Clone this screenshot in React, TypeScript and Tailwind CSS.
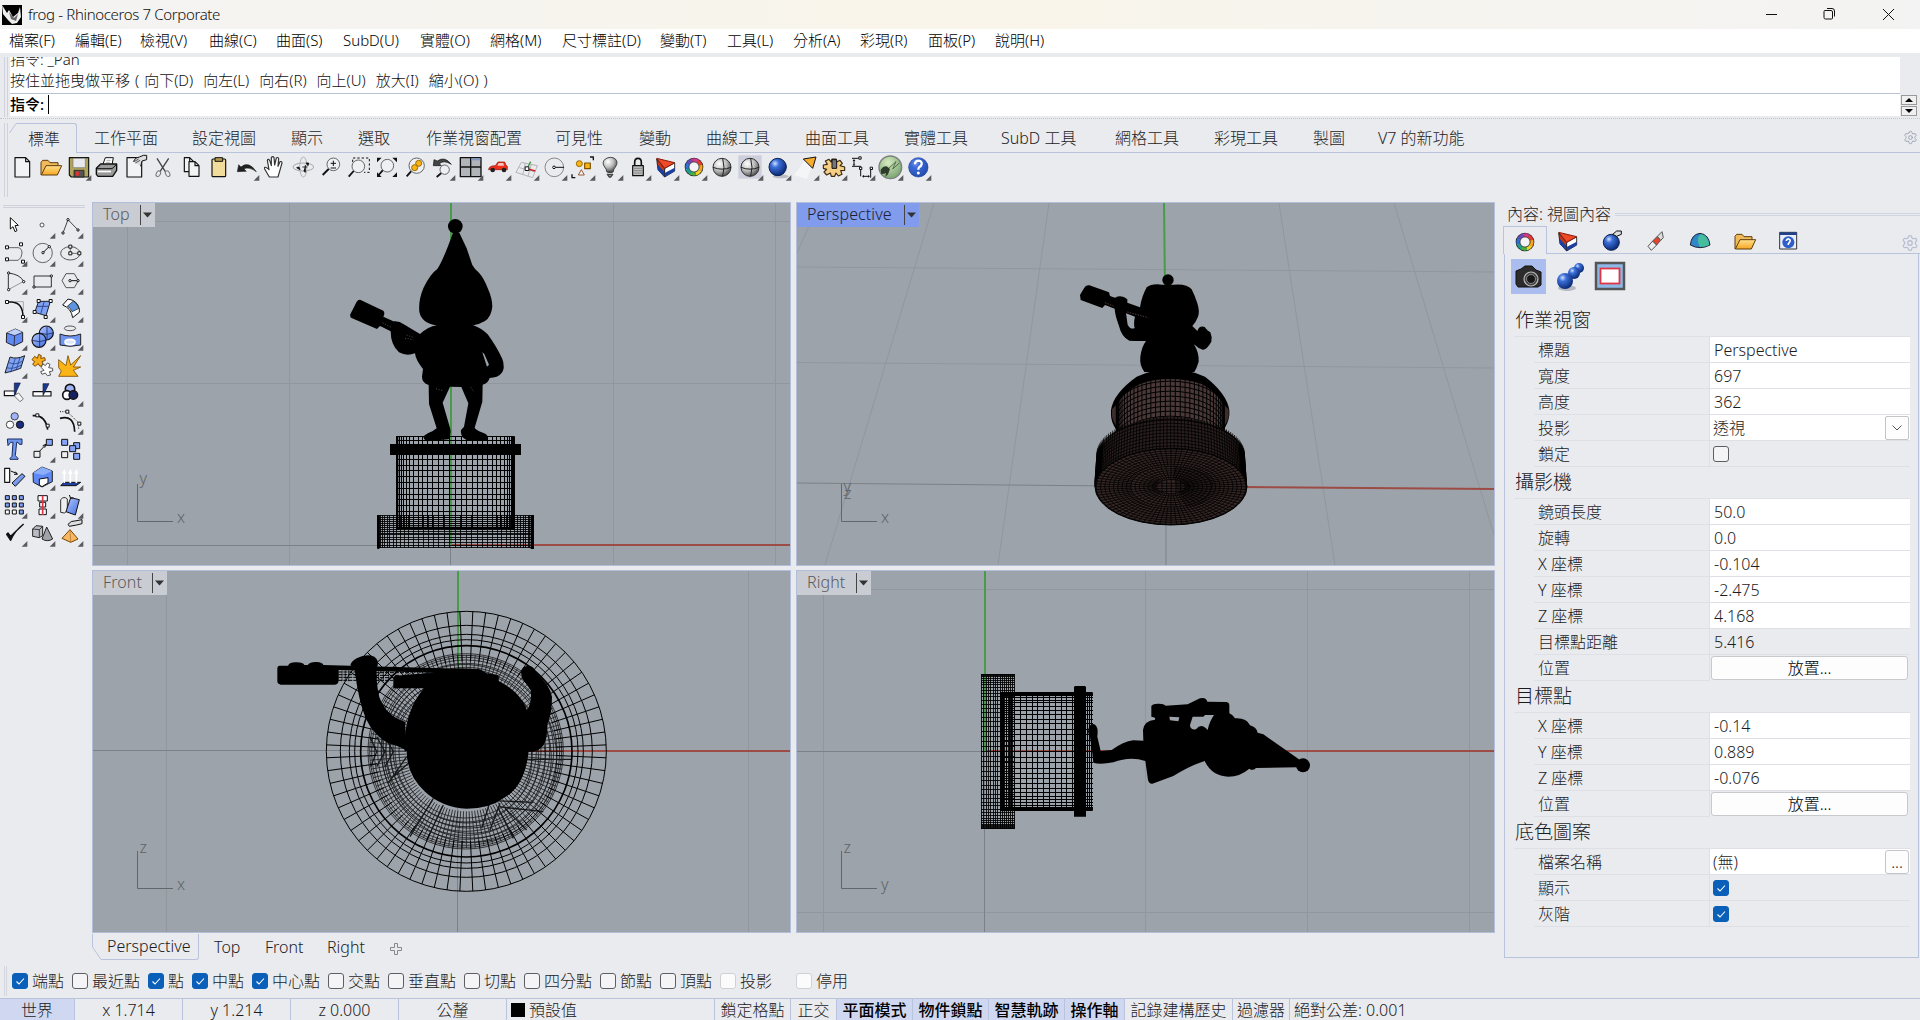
import React from "react";
import { Settings } from "lucide-react";

const FONT = "font-['Noto_Sans','Noto_Sans_CJK_TC',sans-serif]";

/* ---------- icon primitives (84 x 84 drawing units per 28px cell) ---------- */
const K = "#111";
const Sq = ({ x, y, s = 9, f = "#fff" }: { x: number; y: number; s?: number; f?: string }) => (
  <rect x={x - s / 2} y={y - s / 2} width={s} height={s} fill={f} stroke={K} strokeWidth={3} />
);
const Dot = ({ x, y, r = 3.5 }: { x: number; y: number; r?: number }) => (
  <circle cx={x} cy={y} r={r} fill="#fff" stroke={K} strokeWidth={3} />
);
const Ic = ({ children, tri = false }: { children?: React.ReactNode; tri?: boolean }) => (
  <svg viewBox="0 0 84 84" className="h-7 w-7 shrink-0" fill="none" strokeLinejoin="round">
    {children}
    {tri && <path d="M65 83H82V66Z" fill="#5b5b5f" />}
  </svg>
);
const Defs = () => (
  <svg className="absolute h-0 w-0">
    <defs>
      <radialGradient id="bl" cx=".35" cy=".3" r=".75">
        <stop offset="0" stopColor="#cfe0ff" />
        <stop offset=".3" stopColor="#3c6fd8" />
        <stop offset="1" stopColor="#06246e" />
      </radialGradient>
      <radialGradient id="gy" cx=".35" cy=".3" r=".8">
        <stop offset="0" stopColor="#fff" />
        <stop offset=".5" stopColor="#bcbcbc" />
        <stop offset="1" stopColor="#3a3a3a" />
      </radialGradient>
      <linearGradient id="lb" x1="0" y1="0" x2="1" y2="1">
        <stop offset="0" stopColor="#b4c8ff" />
        <stop offset="1" stopColor="#3f6de0" />
      </linearGradient>
      <linearGradient id="yl" x1="0" y1="0" x2="0" y2="1">
        <stop offset="0" stopColor="#ffe08a" />
        <stop offset="1" stopColor="#f5a623" />
      </linearGradient>
      <radialGradient id="gr" cx=".4" cy=".3" r=".8">
        <stop offset="0" stopColor="#d5ecc0" />
        <stop offset="1" stopColor="#6f9a68" />
      </radialGradient>
    </defs>
  </svg>
);

const Lens = ({ x = 52, y = 34, r = 19, hx = 20, hy = 66 }) => (
  <>
    <path d={`M${x - r * 0.7} ${y + r * 0.7}L${hx} ${hy}`} stroke={K} strokeWidth={5.5} />
    <circle cx={x} cy={y} r={r} fill="#eef0f3" stroke="#666" strokeWidth={3} />
  </>
);
const Page = ({ x = 21, y = 14, w = 44, h = 58 }) => (
  <path d={`M${x} ${y}H${x + w - 12}L${x + w} ${y + 12}V${y + h}H${x}Z M${x + w - 12} ${y}V${y + 12}H${x + w}`} fill="#f2f3f5" stroke={K} strokeWidth={3.5} />
);
const Folder = () => (
  <>
    <path d="M15 66V28L20 22H36L42 29H66V38" fill="#f0b95a" stroke="#5f3d0a" strokeWidth={3} />
    <path d="M16 66L30 38H77L64 66Z" fill="url(#yl)" stroke="#5f3d0a" strokeWidth={3} />
  </>
);
const Cake = () => (
  <>
    <path d="M14 18L38 46V72L18 50Z" fill="#c5361c" stroke={K} strokeWidth={2.5} />
    <path d="M16 34L38 58V72L18 52Z" fill="#1c3fa0" />
    <path d="M38 46L68 30V54L38 72Z" fill="#fff" stroke={K} strokeWidth={2.5} />
    <path d="M38 60L68 44V55L38 72Z" fill="#1c3fa0" />
    <path d="M14 16L68 29L38 46Z" fill="#ef4a28" stroke="#8b1c0c" strokeWidth={3} />
  </>
);
const Ring = () => {
  const cols = ["#e23b2e", "#f7a51c", "#f5d020", "#4caf3f", "#1e9e8f", "#2f6fd6", "#6b49b8", "#d03a8a"];
  return (
    <>
      <circle cx={42} cy={42} r={28} fill="#222" />
      {cols.map((c, i) => (
        <circle key={c} cx={42} cy={42} r={21} stroke={c} strokeWidth={10} strokeDasharray="17 200" transform={`rotate(${i * 45 - 60} 42 42)`} />
      ))}
      <circle cx={42} cy={42} r={15} fill="#f4f4f6" stroke="#444" strokeWidth={2} />
    </>
  );
};
const GraySphere = () => (
  <>
    <circle cx={42} cy={43} r={27} fill="url(#gy)" stroke="#333" strokeWidth={3} />
    <path d="M15 43Q42 54 69 43M44 16Q52 43 44 70" stroke="#222" strokeWidth={3} />
  </>
);

/* ---------- main toolbar ---------- */
const topIcons: [React.ReactNode, boolean][] = [
  [<Page />, false],
  [<Folder />, false],
  [<><path d="M16 14H74V72H22L16 66Z" fill="#b0a45c" stroke={K} strokeWidth={3.5} /><rect x={27} y={16} width={37} height={28} fill="#e7e9ee" stroke="#777" strokeWidth={2} /><rect x={30} y={52} width={30} height={20} fill="#555" stroke={K} strokeWidth={2} /><rect x={36} y={56} width={9} height={12} fill="#d33" /></>, true],
  [<><path d="M32 36L40 14H64L60 36Z" fill="#fff" stroke={K} strokeWidth={3} /><path d="M13 46L26 33H74V52L62 70H18L13 64Z" fill="#9a9a9a" stroke={K} strokeWidth={4} /><path d="M14 47H60L73 35" stroke={K} strokeWidth={3} /><rect x={17} y={53} width={40} height={5} fill="#fff" /><path d="M44 22H56M42 28H54" stroke="#888" strokeWidth={2} /></>, false],
  [<><Page /><path d="M40 26Q46 12 58 12L70 7H80V20L66 24L62 40" fill="#ddd" stroke={K} strokeWidth={3} /><path d="M42 26L56 18M46 30L60 22" stroke={K} strokeWidth={2} /></>, false],
  [<><path d="M27 16L52 56M62 16L36 56" stroke="#444" strokeWidth={4} /><ellipse cx={31} cy={62} rx={6} ry={9} stroke="#777" strokeWidth={3} transform="rotate(30 31 62)" /><ellipse cx={59} cy={62} rx={6} ry={9} stroke="#777" strokeWidth={3} transform="rotate(-30 59 62)" /></>, false],
  [<><Page x={25} w={28} h={42} /><Page x={39} y={26} w={30} h={44} /></>, false],
  [<><rect x={24} y={18} width={41} height={53} rx={3} fill="#f1dc9c" stroke={K} strokeWidth={3.5} /><rect x={33} y={14} width={23} height={11} fill="#b39a4c" stroke={K} strokeWidth={3} /></>, false],
  [<path d="M16 56L20 35L27 42Q50 22 73 56Q50 40 36 48L43 55Z" fill="#222" stroke={K} strokeWidth={1.5} />, true],
  [<path d="M28 72L14 48Q12 40 20 44L27 50L22 22Q24 16 29 22L34 38L34 14Q38 8 42 14L44 36L49 15Q54 11 56 17L54 40L60 26Q66 24 66 30L58 58L54 72Z" fill="#fff" stroke="#333" strokeWidth={3.5} />, false],
  [<><ellipse cx={46} cy={42} rx={31} ry={12} stroke="#999" strokeWidth={2.5} /><ellipse cx={46} cy={42} rx={11} ry={30} stroke="#aaa" strokeWidth={2.5} /><path d="M26 44L36 50L33 42ZM54 30L60 38L62 30ZM43 42H58M52 36V58L47 54" fill={K} stroke={K} strokeWidth={2.5} /></>, false],
  [<><Lens /><path d="M44 31H60M52 23V39M44 45H60" stroke={K} strokeWidth={3} /></>, false],
  [<><path d="M26 40V15H76V58H60" stroke={K} strokeWidth={3} strokeDasharray="7 6" /><Lens x={43} y={40} hx={14} hy={71} /></>, false],
  [<><Lens x={46} y={38} hx={20} hy={66} /><path d="M15 28V14H29ZM61 14H75V28ZM15 58V72H29ZM75 58V72H61Z" fill={K} /></>, false],
  [<><Lens x={50} y={38} r={23} hx={20} hy={70} /><circle cx={56} cy={31} r={9} fill="#fbb416" stroke="#9a6a00" strokeWidth={3} /><circle cx={44} cy={44} r={9} fill="#fbb416" stroke="#9a6a00" strokeWidth={3} /></>, false],
  [<><path d="M16 38L18 20L28 24Q50 8 70 34Q48 20 34 32L40 38Z" fill="#444" stroke={K} strokeWidth={2} /><Lens x={50} y={50} r={14} hx={26} hy={72} /></>, true],
  [<><rect x={13} y={14} width={62} height={57} fill="#b1b4b9" stroke={K} strokeWidth={4} /><path d="M44 14V71M13 42H75" stroke={K} strokeWidth={4} /><path d="M46 16H73V22H46Z" fill="#8097c0" /></>, true],
  [<><path d="M14 48Q16 38 34 38L42 27H62L66 37L70 40V50H14Z" fill="#ee2f1c" stroke="#8d1108" strokeWidth={2} /><path d="M44 30H58L60 38H40Z" fill="#f7c5c0" /><circle cx={26} cy={51} r={7} fill="#222" /><circle cx={60} cy={51} r={7} fill="#222" /></>, true],
  [<><path d="M12 58L28 28L76 38L62 74ZM22 44L68 56M40 30L32 66M58 34L48 70" stroke="#aaa" strokeWidth={2.5} /><path d="M48 42L56 26" stroke="#3b9b3b" strokeWidth={4} /><path d="M48 48L70 54" stroke="#c22" strokeWidth={4} /><Sq x={45} y={47} s={11} /></>, true],
  [<><circle cx={43} cy={43} r={28} stroke="#888" strokeWidth={3} /><path d="M43 43H72" stroke={K} strokeWidth={3} /><circle cx={42} cy={43} r={4} fill="#fff" stroke={K} strokeWidth={3} /></>, true],
  [<><path d="M12 64V74H22M66 12H76V22" stroke={K} strokeWidth={4} /><circle cx={34} cy={32} r={9} fill="#fbb416" stroke="#9a6a00" strokeWidth={3} /><rect x={50} y={30} width={17} height={17} fill="#fbb416" stroke="#7a5200" strokeWidth={3.5} /><path d="M40 50L49 66H31Z" fill="#f4f4f4" stroke="#965a3a" strokeWidth={3} /></>, true],
  [<><path d="M32 56Q32 48 26 42Q16 28 28 18Q44 8 58 18Q68 28 58 42Q52 48 52 56Z" fill="url(#gy)" stroke="#444" strokeWidth={3} /><path d="M34 58H50M34 64H50L44 72H40Z" fill="#999" stroke="#444" strokeWidth={4} /></>, true],
  [<><path d="M32 42V28Q32 16 42 16Q52 16 52 28V42" stroke={K} strokeWidth={5} /><rect x={26} y={38} width={32} height={30} fill="#bdbdbd" stroke={K} strokeWidth={3.5} /><path d="M30 46H54M30 53H54M30 60H54" stroke="#888" strokeWidth={3} /></>, true],
  [<Cake />, true],
  [<Ring />, true],
  [<GraySphere />, false],
  [<><rect x={7} y={7} width={70} height={70} fill="#cdd0dc" /><GraySphere /></>, true],
  [<><ellipse cx={50} cy={70} rx={24} ry={6} fill="#b9bcc4" /><circle cx={41} cy={42} r={26} fill="url(#bl)" stroke="#0a2050" strokeWidth={3} /></>, true],
  [<><path d="M38 24L58 46L44 78L6 66Z" fill="#f5f5f7" /><path d="M34 18L72 12L62 46Z" fill="#f7ac2c" stroke={K} strokeWidth={3} /></>, true],
  [<><path d="M36 18H48L50 27L60 22L67 31L60 38L74 42V52L62 53L66 64L55 69L48 60L44 70H34L31 60L20 66L12 57L20 49L10 46V36L22 34L16 24L27 19L34 27Z" fill="#f4cf85" stroke="#3a2a10" strokeWidth={3.5} /><rect x={36} y={20} width={14} height={26} fill="#777" stroke={K} strokeWidth={3} /></>, true],
  [<><path d="M12 16H32M12 40H38V70M68 46V74M18 22V34M46 70H60" stroke={K} strokeWidth={3} /><path d="M14 24L18 18L22 24ZM14 34L18 40L22 34ZM48 66L42 70L48 74ZM60 66L66 70L60 74Z" fill={K} /><Sq x={36} y={15} s={7} /><Sq x={38} y={46} s={7} /><Sq x={70} y={46} s={7} /></>, true],
  [<><circle cx={43} cy={43} r={34} fill="url(#gr)" stroke="#7b807b" strokeWidth={4} /><path d="M38 46L60 26L50 48L70 30M26 62L30 54" stroke="#3f5c3a" strokeWidth={2.5} /><path d="M14 50Q22 38 32 40L42 48L36 64L28 72L30 60L16 64Z" fill="#2e3c2c" /></>, true],
  [<><circle cx={43} cy={43} r={29} fill="url(#bl)" stroke="#24419a" strokeWidth={2} /><circle cx={43} cy={43} r={28} fill="#3a68d8" opacity={0.6} /><path d="M33 34Q33 23 44 23Q54 24 53 33Q52 39 46 42Q43 45 43 50" stroke="#fff" strokeWidth={7} /><circle cx={43} cy={60} r={4.5} fill="#fff" /></>, true],
];

/* ---------- side toolbar ---------- */
const LB = "url(#lb)";
const sideIcons: [React.ReactNode, boolean][] = [
  [<path d="M31 20V54L39 47L45 62L51 59L45 44L55 43Z" fill="#fff" stroke={K} strokeWidth={3} />, false],
  [<circle cx={42} cy={42} r={6} fill="#fff" stroke="#555" strokeWidth={3} />, true],
  [<><path d="M21 66L36 26L66 57" stroke="#444" strokeWidth={3} /><Dot x={21} y={66} /><Dot x={36} y={26} /><Dot x={66} y={57} /></>, true],
  [<><path d="M22 26H54Q66 28 66 42Q66 58 54 64H22" stroke="#666" strokeWidth={3} /><Sq x={21} y={25} /><Sq x={21} y={61} /><Sq x={63} y={16} /><Sq x={69} y={68} /></>, true],
  [<><circle cx={44} cy={42} r={29} stroke="#666" strokeWidth={3} /><path d="M45 41L64 22" stroke={K} strokeWidth={3} /><Dot x={45} y={41} /><Dot x={64} y={23} /></>, true],
  [<><ellipse cx={43} cy={43} rx={29} ry={20} stroke="#555" strokeWidth={3} /><path d="M43 22V43H70" stroke="#555" strokeWidth={2.5} /><Sq x={43} y={23} /><Sq x={43} y={43} /><Sq x={70} y={43} /></>, true],
  [<><path d="M25 66V18Q60 22 71 43" stroke="#333" strokeWidth={3} /><path d="M25 68L71 43" stroke="#999" strokeWidth={3} /><Dot x={26} y={18} /><Dot x={26} y={68} /><Dot x={71} y={44} /></>, true],
  [<><rect x={18} y={27} width={52} height={33} stroke="#333" strokeWidth={3} /><Dot x={18} y={60} /><Dot x={70} y={27} /></>, true],
  [<><path d="M30 20H55L67 41L55 62H30L18 41Z" stroke="#555" strokeWidth={3} /><path d="M43 41H66" stroke={K} strokeWidth={3} /><Dot x={42} y={41} /><Dot x={66} y={41} /></>, true],
  [<><path d="M45 20H70V48" stroke="#888" strokeWidth={2} /><path d="M22 21H36Q68 24 69 64" stroke={K} strokeWidth={4.5} /><Sq x={21} y={21} /><Sq x={69} y={66} /></>, true],
  [<><path d="M32 19H67L54 62L20 52Z" fill="#7ea0f5" stroke="#222" strokeWidth={3} /><path d="M49 19L38 57M26 34H61" stroke="#223a80" strokeWidth={2.5} /><Sq x={32} y={18} /><Sq x={68} y={18} /><Sq x={20} y={51} /><Sq x={53} y={66} /></>, true],
  [<><path d="M36 12Q64 16 70 42V52L50 68Q46 40 20 30Z" fill="#fff" stroke={K} strokeWidth={3} /><path d="M52 18Q64 26 69 40L48 50Q44 38 34 34Z" fill="#5d94e0" stroke={K} strokeWidth={2} /></>, true],
  [<><path d="M20 30L46 18L68 28V56L42 69L19 58Z" fill="#5f8af5" stroke="#222" strokeWidth={3} /><path d="M20 30L46 18L68 28L44 38Z" fill="#bfd0fb" /><path d="M20 30L44 38L42 69M44 38L68 28" stroke="#223" strokeWidth={2.5} /></>, true],
  [<><circle cx={55} cy={30} r={21} fill={LB} stroke={K} strokeWidth={3.5} /><path d="M34 30Q55 38 76 30M57 10V50" stroke="#1a2c66" strokeWidth={2.5} /><circle cx={33} cy={52} r={21} fill={LB} stroke={K} strokeWidth={3.5} /><path d="M13 52Q33 60 53 52M35 32V72" stroke="#1a2c66" strokeWidth={2.5} /></>, true],
  [<><ellipse cx={42} cy={16} rx={17} ry={7} stroke="#555" strokeWidth={3} /><path d="M12 33Q42 45 74 33V66Q42 74 12 66Z" fill="#6f95f0" stroke="#222" strokeWidth={3} /><ellipse cx={42} cy={57} rx={15} ry={8} fill="#dbe6ff" stroke="#fff" strokeWidth={5} /></>, true],
  [<><path d="M30 18Q50 26 74 14L62 52Q40 60 15 66Z" fill="#80a3f2" stroke="#222" strokeWidth={3} /><path d="M24 34Q46 44 69 30M18 50Q42 56 64 42M46 22L32 64M60 20L48 58" stroke="#2a4590" strokeWidth={2.5} /></>, true],
  [<><path d="M20 16L28 22L32 10L40 14L38 22L50 20L52 28L42 32L46 42L36 46L30 38L22 46L14 40L20 32L12 26Z" fill="#f9ad1c" stroke="#7a4c00" strokeWidth={3} /><path d="M44 38L52 44L58 36L66 40L62 50L74 52V60L64 62L68 72L58 74L52 66L42 70L38 62L48 58L40 50Z" fill="#fff" stroke="#555" strokeWidth={3} /></>, false],
  [<path d="M8 26L30 44L36 14L44 42L74 14L52 48L74 48L52 58L66 76H8L16 60L8 50Z" fill="#fbb416" stroke="#7a4c00" strokeWidth={2.5} />, false],
  [<><rect x={13} y={36} width={34} height={14} fill="#fff" stroke={K} strokeWidth={3.5} /><path d="M42 50L56 42L70 60L60 68Z" fill="#f6f6f8" stroke="#777" strokeWidth={3} /><path d="M43 12H61L43 50Z" fill="#1c3a8c" stroke="#111a40" strokeWidth={2} /></>, false],
  [<><rect x={15} y={38} width={54} height={13} fill="#fff" stroke={K} strokeWidth={3.5} /><path d="M45 14H63L45 50Z" fill="#1c3a8c" stroke="#111a40" strokeWidth={2} /></>, false],
  [<><circle cx={42} cy={30} r={14} fill="#9fb4f8" stroke={K} strokeWidth={5} /><circle cx={33} cy={48} r={13} fill="#fff" stroke={K} strokeWidth={5} /><circle cx={52} cy={48} r={13} fill="#15205e" stroke={K} strokeWidth={4} /></>, true],
  [<><circle cx={44} cy={28} r={11} fill="#9fb4f8" stroke="#444" strokeWidth={3} /><circle cx={30} cy={53} r={11} fill="#fff" stroke="#444" strokeWidth={3} /><circle cx={60} cy={53} r={11} fill="#1b2b80" stroke={K} strokeWidth={3} /></>, false],
  [<><path d="M14 26Q52 22 59 68" stroke={K} strokeWidth={5} /><Sq x={28} y={25} /><Sq x={59} y={56} /></>, false],
  [<><path d="M12 34Q54 22 56 74" stroke={K} strokeWidth={5} /><path d="M12 14H34L68 48V68" stroke={K} strokeWidth={3} strokeDasharray="3 4" /><Sq x={34} y={14} /><Sq x={70} y={50} /></>, true],
  [<path d="M22 12H66V28H58L54 22H50L46 62L54 70V73H30V70L36 64L39 22H32L24 32Z" fill="#6d98ee" stroke="#1b2c60" strokeWidth={3} />, false],
  [<><path d="M30 54L54 28M54 28L44 32M54 28L50 38" stroke={K} strokeWidth={3} /><Sq x={64} y={22} s={18} f="#86a5fa" /><Sq x={27} y={58} s={18} f="#eee" /></>, true],
  [<><Sq x={26} y={22} s={18} f="#86a5fa" /><Sq x={62} y={32} s={18} f="#86a5fa" /><Sq x={50} y={41} s={18} f="#86a5fa" /><Sq x={26} y={59} s={18} f="#eee" /><Sq x={62} y={64} s={18} f="#86a5fa" /></>, false],
  [<><rect x={14} y={16} width={15} height={42} fill="#fff" stroke={K} strokeWidth={3.5} /><path d="M32 24L52 32M52 34L46 26M52 34H42" stroke={K} strokeWidth={3} /><path d="M66 32L75 40L46 70L36 60Z" fill={LB} stroke={K} strokeWidth={3} /></>, false],
  [<><path d="M15 30L42 12L73 24V56L42 72L16 58Z" fill="#5f8af5" stroke="#222" strokeWidth={3} /><path d="M15 30L42 12L73 24L46 36Z" fill="#8daef8" /><path d="M34 48L60 44V60L42 71L34 66Z" fill="#fff" stroke={K} strokeWidth={3} /></>, true],
  [<><path d="M24 58H74L60 68H14Z" fill="#1f3fa0" stroke={K} strokeWidth={3} /><path d="M25 60V24M43 60V24M61 60V24" stroke="#fff" strokeWidth={5} /><path d="M18 32L25 18L32 32ZM36 32L43 18L50 32ZM54 32L61 18L68 32Z" fill="#fff" /></>, true],
  [<>{[20, 42, 63].map((y) => [22, 43, 64].map((x) => <Sq key={`${x}-${y}`} x={x} y={y} s={12} f={y === 63 && x < 60 ? "#fff" : "#7f9ff5"} />))}</>, true],
  [<><rect x={30} y={14} width={28} height={16} fill="#fff" stroke={K} strokeWidth={3} /><rect x={35} y={34} width={18} height={14} fill="#fff" stroke={K} strokeWidth={3} /><rect x={33} y={54} width={22} height={17} fill="#fff" stroke={K} strokeWidth={3} /><path d="M44 14V72" stroke="#e0334a" strokeWidth={5} /></>, true],
  [<><path d="M14 26Q24 14 34 24V60Q26 70 14 64Z" fill="#eee" stroke="#333" strokeWidth={3} /><path d="M44 20L70 26L58 72L30 62Z" fill={LB} stroke={K} strokeWidth={3} /><path d="M40 12L44 22L52 20" stroke={K} strokeWidth={3} /></>, true],
  [<path d="M20 46L32 64Q44 36 70 16L32 52L24 42Z" fill={K} stroke={K} strokeWidth={4} />, true],
  [<><path d="M14 30L24 20L44 22V50L34 56L14 52Z" fill="#b9bcc2" stroke="#222" strokeWidth={3} /><path d="M14 30L34 32L44 22M34 32V56" stroke="#222" strokeWidth={2.5} /><path d="M56 24L74 60Q58 70 42 60Z" fill="#a0a3a8" stroke="#222" strokeWidth={3} /></>, true],
  [<><path d="M42 32L66 60L44 70L18 58Z" fill="#f7b865" stroke="#7a4600" strokeWidth={3} /><path d="M42 32L44 70" stroke="#a86a1c" strokeWidth={2} /><path d="M36 16Q46 4 56 6L78 2V14L62 18L40 22Z" fill="#ddd" stroke={K} strokeWidth={3} /></>, true],
];

/* ---------- viewports ---------- */
const BG = "#9da3aa";
const Axis = ({ x, y, v, h, dv = 0 }: { x: number; y: number; v: string; h: string; dv?: number }) => (
  <g fill="#5f6367" fontSize={16} fontFamily="Noto Sans, sans-serif">
    <path d={`M${x + 0.5} ${y - 37}V${y + 0.5}H${x + 36}`} stroke="#63676b" fill="none" />
    <text x={x + 2.5} y={y - 37 + dv}>{v}</text>
    <text x={x + 40} y={y + 2}>{h}</text>
  </g>
);
const View = ({ name, active = false, box, children, w, low = false }: { name: string; active?: boolean; box: string; children: React.ReactNode; w: string; low?: boolean }) => (
  <div className={`relative w-[699px] overflow-hidden border border-[#b3bfda] bg-[#9da3aa] ${low ? "h-[363px]" : "h-[364px]"}`}>
    <svg viewBox={box} className="block h-[362px] w-[698px]" preserveAspectRatio="none">{children}</svg>
    <div className={`absolute top-0 left-0 flex h-[24px] items-center text-[16px] ${w} ${active ? "bg-[#819bed] text-[#1c2233]" : "bg-[#c9ccd2] text-[#5a5a5a]"}`}>
      <span className="flex-1 pb-[2px] pl-[10px] leading-none tracking-[0.1px]">{name}</span>
      <span className="h-[20px] w-px bg-[#444]" />
      <svg viewBox="0 0 14 24" className="h-6 w-[14px]"><path d="M2 9.500H11L6.500 14.500Z" fill="#333" /></svg>
    </div>
  </div>
);
const sinGrid = (c: number, r: number, n: number) => {
  const out: number[] = [];
  for (let i = -n; i <= n; i++) out.push(c + r * Math.sin((i * Math.PI) / (2 * n)));
  return out;
};
const range = (a: number, b: number, s: number) => {
  const out: number[] = [];
  for (let v = a; v <= b; v += s) out.push(v);
  return out;
};
const vl = (xs: number[], a: number, b: number) => xs.map((x) => `M${x.toFixed(1)} ${a}V${b}`).join("");
const hl = (ys: number[], a: number, b: number) => ys.map((y) => `M${a} ${y.toFixed(1)}H${b}`).join("");
const GRID = "#92979e";
const DARK = "#7c8188";

const TopView = () => (
  <View name="Top" box="93 203 698 362" w="w-[62px]">
    <path d="M127.500 203V566M289.500 203V566M613.500 203V566M775.500 203V566M93 221.500H792M93 383.500H792" stroke={GRID} />
    <path d="M93 545.500H451M450.500 546V566" stroke={DARK} />
    <path d="M451 545H792" stroke="#9c4b45" strokeWidth={2} />
    <path d="M451 203V545" stroke="#479c48" strokeWidth={2} />
    <g transform="translate(300 200) scale(.33333)">
      <g stroke="#000" strokeWidth={3} shapeRendering="crispEdges" fill="none">
        <path d={vl(sinGrid(466, 176, 16), 709, 988)} />
        <path d={hl([710, 722, ...range(778, 985, 17.4)], 289, 643)} />
        <path d={vl(sinGrid(466, 233, 22), 945, 1045)} strokeWidth={2.6} />
        <path d={hl([...range(946, 1000, 6), ...range(1004, 1046, 8)], 232, 701)} strokeWidth={2.6} />
      </g>
      <path d="M289 709h6v280h-6zM637 709h8v280h-8zM232 945h6v102h-6zM692 945h10v102h-10zM289 980h355v8H289zM270 732h393v33H270z" />
      <circle cx={466} cy={79} r={22} />
      <path d="M460 95L478 98L500 145L517 195Q525 210 537 218Q552 235 562 262Q577 295 577 320Q574 350 555 363Q540 372 520 376Q545 385 563 403Q590 440 606 475Q612 487 611 505Q608 523 590 530Q580 533 569 534Q565 550 548 554L547 605L524 683Q528 690 545 697Q562 702 564 712Q562 724 552 722L500 720Q480 712 483 690L492 680L505 610L484 561L450 560L428 608L450 683Q455 700 446 718L380 724Q368 718 371 708Q380 700 397 694L410 685L387 612L386 555Q366 548 366 530L369 507Q347 480 345 460Q320 470 297 457Q272 435 272 394L240 378L231 387L153 353Q149 348 151 343L170 305Q176 297 182 300L250 332Q256 340 250 350L280 364Q298 362 310 372L360 402Q385 380 410 376Q365 370 358 335Q355 300 370 265Q390 222 412 207Q430 180 460 95Z" />
      <path d="M547 457L553 462L567 494L561 500Z" fill={BG} />
      <path d="M315 416H325L340 420M248 369L274 382M320 405L340 412M408 566L428 572M512 562L522 576" stroke="#777" strokeWidth={2} strokeDasharray="3 5" fill="none" />
    </g>
    <Axis x={137} y={521} v="y" h="x" />
  </View>
);

const polar = (cx: number, cy: number, rx: number, ry: number, t: number) => [cx + rx * Math.cos(t), cy + ry * Math.sin(t)];
const spokes = (cx: number, cy: number, rx1: number, ry1: number, rx2: number, ry2: number, n: number, off = 0) => {
  let d = "";
  for (let i = 0; i < n; i++) {
    const t = ((i + off) * 2 * Math.PI) / n;
    const [a, b] = polar(cx, cy, rx1, ry1, t);
    const [e, f] = polar(cx, cy, rx2, ry2, t);
    d += `M${a.toFixed(1)} ${b.toFixed(1)}L${e.toFixed(1)} ${f.toFixed(1)}`;
  }
  return d;
};
const wall = (cx: number, y1: number, rx1: number, ry1: number, y2: number, rx2: number, ry2: number, n: number) => {
  let d = "";
  for (let i = 0; i <= n; i++) {
    const t = Math.PI + (i * Math.PI) / n;
    const [a, b] = polar(cx, y1, rx1, ry1, t);
    const [e, f] = polar(cx, y2, rx2, ry2, t);
    d += `M${a.toFixed(1)} ${b.toFixed(1)}L${e.toFixed(1)} ${f.toFixed(1)}`;
  }
  return d;
};

const PerspectiveView = () => (
  <View name="Perspective" active box="797 203 698 362" w="w-[122px]">
    <path d="M797 267L1495 272M797 362.500L1495 368M819 203L660 565M934 203L825 565M1049 203L998 565M1279 203L1335 565M1394 203L1503 565" stroke={GRID} fill="none" />
    <path d="M797 483L1166 486.500V566" stroke={DARK} fill="none" />
    <path d="M1166 486.500L1495 489" stroke="#9c4b45" strokeWidth={2} />
    <path d="M1164 203L1165 290" stroke="#479c48" strokeWidth={2} />
    <g transform="translate(1040 200) scale(.33333)">
      <path d="M213 630Q220 580 290 530Q340 507 391 507Q445 507 495 530Q560 580 568 630V645Q565 670 550 690L228 688Q213 665 213 645Z" />
      <path d="M216 628V648Q220 668 231 680L234 610ZM566 628V648Q562 668 551 680L547 610Z" fill="#3c2d2c" />
      <path d="M229 625Q235 585 300 552Q340 537 391 537Q440 537 485 552Q545 585 552 625V700H229Z" fill="#4a3938" />
      <g stroke="#000" fill="none" strokeWidth={3}>
        <path d={wall(391, 620, 162, 83, 760, 162, 83, 34)} />
        {range(0, 130, 15).map((o) => <path key={o} d={`M229 ${620 + o}A162 83 0 0 1 552 ${620 + o}`} />)}
      </g>
      <path d="M166 860L172 765Q178 730 228 693Q300 650 391 650Q485 650 560 693Q608 725 613 765L620 860Z" fill="#2a201f" />
      <g stroke="#000" fill="none" strokeWidth={2.4}>
        <path d={wall(392, 860, 228, 115, 760, 221, 110, 66)} />
        {range(0, 98, 10).map((o) => <path key={o} d={`M${172 - o * 0.06} ${760 + o}A221 110 0 0 1 ${613 + o * 0.06} ${760 + o}`} />)}
      </g>
      <path d="M166 860L172 765Q176 745 190 730L184 820ZM620 860L613 765Q610 745 596 730L602 820Z" />
      <ellipse cx={393} cy={860} rx={228} ry={115} fill="#352726" stroke="#000" strokeWidth={3} />
      <g stroke="#000" fill="none" strokeWidth={2.4}>
        {range(43, 225, 13).map((r) => <ellipse key={r} cx={393} cy={860} rx={r} ry={r * 0.504} />)}
        <path d={spokes(393, 860, 120, 60, 228, 115, 84)} />
        <path d={spokes(393, 860, 45, 22, 120, 60, 48)} />
        <path d="M350 850H436M344 858H442M346 866H440M354 874H430M366 842V878M380 840V882M394 838V882M408 840V882M422 842V878" />
      </g>
      <path d="M400 800Q500 800 520 850Q510 920 440 920Q400 870 400 800Z" opacity={0.3} />
      <circle cx={384} cy={240} r={17} />
      <path d="M320 262Q335 250 366 254L400 254Q440 250 455 268Q466 290 472 310Q480 335 474 350Q467 368 457 378L472 393Q478 376 494 381Q504 394 511 397Q517 410 514 425Q500 450 488 449Q475 446 462 433Q478 460 476 485Q470 505 463 516L313 516Q298 495 301 470Q305 440 318 423Q290 424 268 422Q245 412 236 375Q225 345 224 326L195 315L187 324L122 300L120 285L132 265Q138 253 148 256L207 277L210 288L225 293Q245 283 262 298L262 308L300 322Q305 290 320 262Z" />
      <path d="M258 340L285 350Q280 370 284 384Q272 390 263 374Z" fill={BG} />
      <path d="M195 308L220 318M262 336L325 353" stroke="#55423f" strokeWidth={3} strokeDasharray="4 4" />
    </g>
    <Axis x={841} y={521} v="y" h="x" dv={8} />
    <text x={844} y={499} fontSize={16} fill="#5f6367" fontFamily="Noto Sans, sans-serif">z</text>
  </View>
);

const FrontView = () => (
  <View name="Front" box="93 571 698 362" w="w-[74px]" low>
    <path d="M166.500 570V934M748.500 570V934" stroke={GRID} />
    <path d="M93 750.500H458M457.500 751V934" stroke={DARK} />
    <path d="M458 751H792" stroke="#9c4b45" strokeWidth={2} />
    <path d="M458 571V751" stroke="#479c48" strokeWidth={2} />
    <g transform="translate(260 590) scale(.33333)">
      <g stroke="#000" fill="none" strokeWidth={3}>
        {[420, 378, 351, 335].map((r) => <circle key={r} cx={619} cy={484} r={r} />)}
        <circle cx={619} cy={484} r={317} strokeWidth={5} />
        <path d={spokes(619, 484, 270, 270, 420, 420, 68, 0.5)} />
      </g>
      <g stroke="#000" fill="none" strokeWidth={2.4} opacity={0.85}>
        {[293, 288, 282, 274, 264, 252, 240, 226, 212, 200].map((r) => <circle key={r} cx={617} cy={484} r={r} />)}
        <path d={spokes(619, 484, 180, 180, 290, 290, 136)} />
        {[200, 216, 232, 246, 258].map((r, i) => <ellipse key={r} cx={612 + i * 3} cy={500 - i * 4} rx={r + 14} ry={r} transform={`rotate(${40 + i * 3} 619 490)`} />)}
        <path d="M440 500L385 580M445 520L400 560M520 625L450 740M550 645L500 750M690 635L665 715M720 640L690 720M700 632L820 637M715 650L850 665M800 508H935M715 655L760 745M735 655L800 720M330 440L350 485L332 530M350 440L375 485L350 530M375 440L400 485L375 530" strokeWidth={4} />
      </g>
      <path d="M434 484Q430 380 480 310Q500 280 560 262H690Q790 300 806 380L806 484Q795 590 730 625Q690 656 620 656Q545 652 495 605Q440 555 440 484Z" />
      <path d="M58 227H84Q88 216 110 217Q130 217 133 225H143Q150 215 170 216Q188 217 190 225L270 227L660 238L680 250L716 256V295H400V262L405 257L520 248L235 240V277Q233 284 225 284H62Q52 282 52 274V235Q52 228 58 227Z" />
      <path d="M235 246H290M235 254H290M235 262H290M235 271H290M345 248H450M345 256H420M345 263H400M345 271H400" stroke="#000" strokeWidth={3} strokeDasharray="12 3" />
      <path d="M235 241V274M246 241V274M256 241V274M266 241V274M356 241V274M370 241V274M386 241V274" stroke="#000" strokeWidth={2} />
      <path d="M271 225Q275 213 290 205Q320 190 343 200Q360 212 350 235Q348 280 358 322Q380 380 435 395L440 482Q410 465 385 460Q340 435 317 385Q295 330 284 240Z" />
      <path d="M783 245Q787 226 808 227Q822 230 826 245Q870 285 876 320Q876 370 863 400L860 440Q852 480 820 485H790L795 370Q818 340 812 300L786 265Z" />
    </g>
    <Axis x={137} y={888} v="z" h="x" dv={2} />
  </View>
);

const RightView = () => (
  <View name="Right" box="797 571 698 362" w="w-[74px]" low>
    <path d="M823.500 570V934M1145.500 570V934M1307.500 570V934M1469.500 570V934M797 589.500H1495M797 912.500H1495" stroke={GRID} />
    <path d="M797 751.500H985M984.500 751V934" stroke={DARK} />
    <path d="M985 751H1495" stroke="#9c4b45" strokeWidth={2} />
    <path d="M985 571V751" stroke="#479c48" strokeWidth={2} />
    <g transform="translate(960 650) scale(.33333)">
      <g stroke="#000" strokeWidth={3} shapeRendering="crispEdges" fill="none">
        <path d={hl(sinGrid(304.5, 175, 16), 121, 398)} />
        <path d={vl([...range(124, 164, 8), ...range(164, 342, 17.4), 382, 389, 396], 128, 482)} />
        <path d={hl(sinGrid(304, 231, 24), 64, 164)} strokeWidth={2.6} />
        <path d={vl([...range(65, 120, 7), ...range(121, 166, 6)], 72, 536)} strokeWidth={2.6} />
      </g>
      <path d="M121 126H398V137H121ZM121 472H398V483H121ZM121 126H129V483H121ZM345 108H375L378 111V500H342V111Z" />
      <circle cx={1029} cy={346} r={21} />
      <path d="M384 245Q386 221 400 222Q412 224 413 245L412 260L422 303L455 300Q490 275 520 271L550 272L549 240Q552 212 585 209L585 203L574 200L574 168Q580 160 597 161Q612 161 617 167L683 163L720 145Q738 140 742 155L800 156Q808 158 808 165V190Q820 195 825 205Q860 203 870 226Q890 232 893 248L910 253L1020 330L1012 352L888 354Q878 364 868 356Q840 380 805 380Q755 378 734 333Q690 347 640 378L577 401Q567 402 564 390L556 333Q510 318 460 337Q420 345 400 338L396 300L390 262Z" />
      <path d="M628 200L658 202L655 214L630 211ZM698 200H730L735 195L762 195Q748 215 743 240L738 235Q722 220 708 238Q690 240 690 225Z" fill={BG} />
    </g>
    <Axis x={841} y={888} v="z" h="y" dv={2} />
  </View>
);

/* ---------- checkboxes ---------- */
const Check = ({ on = false, faint = false }: { on?: boolean; faint?: boolean }) => (
  <span className={`flex h-4 w-4 shrink-0 items-center justify-center rounded-[3px] border ${on ? "border-[#0a5fb8] bg-[#0a5fb8]" : faint ? "border-[#d0d1d5] bg-[#fbfbfc]" : "border-[#5e5e62] bg-[#f4f4f6]"}`}>
    {on && <svg viewBox="0 0 16 16" className="h-4 w-4 shrink-0" fill="none"><path d="M4.500 8.500L7 11L12 5.500" stroke="#fff" strokeWidth={1.100} /></svg>}
  </span>
);

/* ---------- properties panel ---------- */
type Kind = "edit" | "read" | "check" | "checked" | "button" | "select" | "file";
const sections: [string, [string, string, Kind][]][] = [
  ["作業視窗", [["標題", "Perspective", "edit"], ["寬度", "697", "edit"], ["高度", "362", "edit"], ["投影", "透視", "select"], ["鎖定", "", "check"]]],
  ["攝影機", [["鏡頭長度", "50.0", "edit"], ["旋轉", "0.0", "edit"], ["X 座標", "-0.104", "edit"], ["Y 座標", "-2.475", "edit"], ["Z 座標", "4.168", "edit"], ["目標點距離", "5.416", "read"], ["位置", "放置...", "button"]]],
  ["目標點", [["X 座標", "-0.14", "edit"], ["Y 座標", "0.889", "edit"], ["Z 座標", "-0.076", "edit"], ["位置", "放置...", "button"]]],
  ["底色圖案", [["檔案名稱", "(無)", "file"], ["顯示", "", "checked"], ["灰階", "", "checked"]]],
];
const Row = ({ label, value, kind }: { label: string; value: string; kind: Kind }) => {
  const white = kind === "edit" || kind === "select" || kind === "file";
  return (
    <div className="ml-5 flex h-[26px]">
      <div className="flex w-[176px] items-center border-r border-b border-[#dee0e6] pl-[4px]">{label}</div>
      <div className={`flex flex-1 items-center border-b border-[#dee0e6] ${white ? "bg-white" : ""} ${kind === "button" ? "border-b-transparent" : ""}`}>
        {kind === "button" && <div className="ml-px flex h-6 w-[197px] items-center justify-center rounded-[3px] border border-[#c8c9cd] bg-[#fdfdfd] text-black">{value}</div>}
        {(kind === "check" || kind === "checked") && <span className="pl-[3px]"><Check on={kind === "checked"} /></span>}
        {(white || kind === "read") && <span className={`flex-1 ${kind === "edit" || kind === "read" ? "pl-1" : "pl-[3px]"}`}>{value}</span>}
        {kind === "select" && <span className="mr-px flex h-6 w-6 items-center justify-center rounded-[2px] border border-[#c4c5c9] bg-[#fdfdfd]"><svg viewBox="0 0 10 6" className="h-[6px] w-[10px]" fill="none"><path d="M.5 .5L5 5L9.500 .5" stroke="#555" /></svg></span>}
        {kind === "file" && <span className="mr-px flex h-6 w-6 items-center justify-center rounded-[3px] border border-[#c4c5c9] bg-[#fdfdfd]">...</span>}
      </div>
    </div>
  );
};

const panelTabs: React.ReactNode[] = [
  <Ring />,
  <Cake />,
  <><circle cx={40} cy={46} r={24} fill="url(#bl)" stroke="#0a2050" strokeWidth={3} /><path d="M44 22L56 12H70V22L56 28Z" fill="#ddd" stroke={K} strokeWidth={3} /></>,
  <><path d="M18 58L32 42L44 54L28 70Z" fill="#eee" stroke="#555" strokeWidth={3} /><path d="M32 42L46 28L56 40L44 54Z" fill="#e2452c" stroke="#555" strokeWidth={3} /><path d="M46 28L60 14L64 32L56 40Z" fill="#ddd" stroke="#555" strokeWidth={3} /></>,
  <><path d="M13 54Q16 22 42 19Q68 22 72 54Q42 70 13 54Z" fill="#2f86c8" stroke="#223" strokeWidth={3} /><path d="M44 21Q66 26 70 54Q56 60 42 60Q28 36 44 21Z" fill="#46bd9c" /></>,
  <Folder />,
  <><rect x={17} y={16} width={51} height={50} fill="#e8eefc" stroke="#333" strokeWidth={3} /><path d="M17 16H68V24H17Z" fill="#23408c" /><circle cx={43} cy={46} r={18} fill="#2f5ec8" /><path d="M37 42Q38 35 44 36Q51 38 47 45L43 50V54" stroke="#fff" strokeWidth={5} /></>,
];

const menus: [string, string][] = [
  ["檔案(F)", "w-[66px]"], ["編輯(E)", "w-[65px]"], ["檢視(V)", "w-[69px]"], ["曲線(C)", "w-[67px]"], ["曲面(S)", "w-[67px]"], ["SubD(U)", "w-[77px]"], ["實體(O)", "w-[70px]"], ["網格(M)", "w-[72px]"],
  ["尺寸標註(D)", "w-[98px]"], ["變動(T)", "w-[67px]"], ["工具(L)", "w-[66px]"], ["分析(A)", "w-[67px]"], ["彩現(R)", "w-[68px]"], ["面板(P)", "w-[67px]"], ["說明(H)", "w-[67px]"],
];
const tabs: [string, string][] = [
  ["標準", "w-[67px]"], ["工作平面", "w-[98px]"], ["設定視圖", "w-[99px]"], ["顯示", "w-[67px]"], ["選取", "w-[68px]"], ["作業視窗配置", "w-[129px]"], ["可見性", "w-[84px]"], ["變動", "w-[67px]"], ["曲線工具", "w-[99px]"], ["曲面工具", "w-[99px]"],
  ["實體工具", "w-[97px]"], ["SubD 工具", "w-[114px]"], ["網格工具", "w-[99px]"], ["彩現工具", "w-[99px]"], ["製圖", "w-[65px]"], ["V7 的新功能", "w-[110px]"],
];
const snaps: [string, boolean, string, boolean][] = [
  ["端點", true, "w-[60px]", false], ["最近點", false, "w-[76px]", false], ["點", true, "w-[44px]", false], ["中點", true, "w-[60px]", false], ["中心點", true, "w-[76px]", false], ["交點", false, "w-[60px]", false], ["垂直點", false, "w-[76px]", false],
  ["切點", false, "w-[60px]", false], ["四分點", false, "w-[76px]", false], ["節點", false, "w-[60px]", false], ["頂點", false, "w-[60px]", false], ["投影", false, "w-[76px]", true], ["停用", false, "w-[60px]", true],
];
const status: [string, string, number][] = [
  ["世界", "w-[75px] justify-center border-r", 1], ["x 1.714", "w-[108px] justify-center border-r", 0], ["y 1.214", "w-[108px] justify-center border-r", 0], ["z 0.000", "w-[108px] justify-center border-r", 0], ["公釐", "w-[108px] justify-center border-r", 0], ["預設值", "w-[208px] border-r pl-1", 2],
  ["鎖定格點", "w-[76px] justify-center border-r", 0], ["正交", "w-[46px] justify-center border-r", 0], ["平面模式", "w-[76px] justify-center border-r", 3], ["物件鎖點", "w-[76px] justify-center border-r", 3], ["智慧軌跡", "w-[76px] justify-center border-r", 3], ["操作軸", "w-[60px] justify-center border-r", 3],
  ["記錄建構歷史", "w-[108px] justify-center border-r", 0], ["過濾器", "w-[57px] justify-center border-r", 0], ["絕對公差: 0.001", "pl-[4px]", 0],
];

export default function App() {
  return (
    <div className={`flex h-[1020px] w-[1920px] flex-col overflow-hidden bg-[#eaebef] text-[16px] leading-none font-light whitespace-nowrap text-[#1c1c1e] ${FONT}`}>
      <Defs />

      <header className="flex h-[29px] shrink-0 items-center bg-gradient-to-r from-[#f3f3f3] via-[#f9f5ea] to-[#f3f3f3]">
        <svg viewBox="0 0 20 20" className="ml-[2px] h-5 w-5"><rect width={20} height={20} fill="#000" /><path d="M0 0L5 8L7 5L11 12L16 8L18 2L19 12L15 18L10 19L6 15L1 9Z" fill="#eee" /><path d="M7 7L12 13L16 9L14 16L9 14Z" fill="#666" /></svg>
        <span className="ml-[6px] flex-1 text-[15px] tracking-[-0.35px] text-[#111]">frog - Rhinoceros 7 Corporate</span>
        <svg viewBox="0 0 150 29" className="mr-[6px] h-[29px] w-[150px]" fill="none" stroke="#111"><path d="M2 14.500H13M119 9L130 20M130 9L119 20" /><path d="M60 11.500Q60 10.500 61 10.500H67Q68.500 10.500 68.500 12V18Q68.500 19 67.500 19H61.500Q60 19 60 17.500ZM63 8.500H68Q70.500 8.500 70.500 11V16.500" /></svg>
      </header>

      <nav className="flex h-6 shrink-0 items-center bg-white pb-[2px] pl-[9px] text-[15px] text-black">
        {menus.map(([m, w]) => <span key={m} className={w}>{m}</span>)}
      </nav>

      <section className="flex h-[66px] shrink-0 border-b border-dotted border-[#c3c6d2] pt-[4px]">
        <div className="mr-[2px] ml-1 h-[60px] w-[4px] border-x border-[#cfd2dc]" />
        <div className="h-[59px] w-[1890px] bg-white text-[15px] text-[#111]">
          <div className="flex h-[37px] flex-col justify-end overflow-hidden border-b border-[#b9c2d4] pb-[4px]">
            <div className="h-[26px] shrink-0 leading-[26px]">指令: _Pan</div>
            <div className="h-[17px] shrink-0 leading-[17px] [word-spacing:1.100px]">按住並拖曳做平移 ( 向下(D)&nbsp; 向左(L)&nbsp; 向右(R)&nbsp; 向上(U)&nbsp; 放大(I)&nbsp; 縮小(O) )</div>
          </div>
          <div className="flex h-[20px] items-center text-black"><span className="font-medium">指令:</span><span className="ml-[4px] h-[19px] w-px bg-black" /></div>
        </div>
        <div className="flex flex-col justify-end gap-px pb-[2px] pl-[1px]">
          <svg viewBox="0 0 16 10" className="h-[10px] w-4"><rect x={0.500} y={0.500} width={15} height={9} fill="#f0f0f0" stroke="#999" /><path d="M4 7L8 3L12 7Z" /></svg>
          <svg viewBox="0 0 16 10" className="h-[10px] w-4"><rect x={0.500} y={0.500} width={15} height={9} fill="#f0f0f0" stroke="#999" /><path d="M4 3L8 7L12 3Z" /></svg>
        </div>
      </section>

      <section className="flex h-[83px] shrink-0 pt-[4px]">
        <div className="mr-px ml-1 h-[74px] w-[4px] border-x border-[#cfd2dc]" />
        <div className="flex-1">
          <div className="flex h-[30px]">
            <div className="flex w-[68px]">
              <svg viewBox="0 0 10 30" className="h-[30px] w-[10px]" fill="none"><path d="M.5 10L7 .5H10" stroke="#b9c3dc" /></svg>
              <div className="flex flex-1 items-center rounded-tr-[3px] border-t border-r border-[#b9c3dc] pl-[9px]">標準</div>
            </div>
            <div className="flex flex-1 items-center border-b border-[#b9c3dc] pl-[17px]">
              {tabs.slice(1).map(([t, w]) => <span key={t} className={w}>{t}</span>)}
              <span className="flex-1" />
              <Settings className="mr-[2px] h-[15px] w-[15px] text-[#9aa0b0]" strokeWidth={1.500} />
            </div>
          </div>
          <div className="-ml-px flex h-7">{topIcons.map(([g, t], i) => <Ic key={i} tri={t}>{g}</Ic>)}</div>
        </div>
      </section>

      <main className="flex h-[758px] shrink-0">
        <aside className="w-[92px] pt-[3px]">
          <div className="mb-[3px] ml-[3px] h-[3px] w-[82px] border-y border-[#cfd2dc]" />
          <div className="grid w-[84px] grid-cols-3">{sideIcons.map(([g, t], i) => <Ic key={i} tri={t}>{g}</Ic>)}</div>
        </aside>
        <div className="w-[1404px]">
          <div className="grid grid-cols-[699px_699px] gap-x-[5px] gap-y-1">
            <TopView />
            <PerspectiveView />
            <FrontView />
            <RightView />
          </div>
          <div className="flex h-[27px] items-center text-[16px]">
            <svg viewBox="0 0 12 26" className="h-[26px] w-3" fill="none"><path d="M.5 0V13L9 25.500H12" stroke="#b9c3dc" /></svg>
            <div className="flex h-[26px] w-[95px] items-center rounded-br-[3px] border-r border-b border-[#b9c3dc] pl-[3px]">Perspective</div>
            <span className="w-[51px] pl-[15px]">Top</span>
            <span className="w-[62px] pl-[15px]">Front</span>
            <span className="w-[70px] pl-[15px]">Right</span>
            <svg viewBox="0 0 12 12" className="mt-[4px] ml-[8px] h-3 w-3" fill="none"><path d="M4.500 .5H7.500V4.500H11.500V7.500H7.500V11.500H4.500V7.500H.5V4.500H4.500Z" stroke="#888" /></svg>
          </div>
        </div>
        <aside className="flex w-[424px] flex-col pl-[7px]">
          <div className="flex h-[24px] items-center pl-1"><span>內容: 視圖內容</span><div className="ml-1 h-[3px] flex-1 border-y border-[#cfd6e2]" /></div>
          <div className="flex h-7">
            <div className="flex w-[44px] items-center justify-center border-x border-t border-[#b9c3dc] pt-[2px]"><Ic>{panelTabs[0]}</Ic></div>
            <div className="flex flex-1 items-center border-b border-[#b9c3dc] pt-[3px] pl-[7px]">
              {panelTabs.slice(1).map((g, i) => <div key={i} className="w-[44px]"><Ic>{g}</Ic></div>)}
              <span className="flex-1" />
              <Settings className="mt-[3px] mr-px h-[18px] w-[18px] text-[#b7bfd2]" strokeWidth={1.700} />
            </div>
          </div>
          <div className="ml-px h-[704px] w-[415px] border-x border-b border-[#b9c3dc]">
            <div className="flex h-[50px] items-start gap-[5px] pt-[5px] pl-[6px]">
              <svg viewBox="0 0 35 35" className="h-[35px] w-[35px] bg-[#aabdee]"><path d="M5 12L10 10L14 7H21L25 11L30 13V26L27 28H7L5 25Z" fill="#2c2c2c" stroke="#111" /><circle cx={20} cy={20} r={7} fill="#444" stroke="#bbb" strokeWidth={1.200} /><circle cx={20} cy={20} r={4.500} fill="#181818" stroke="#888" /></svg>
              <svg viewBox="0 0 35 35" className="ml-[2px] h-[35px] w-[35px]"><ellipse cx={14} cy={29} rx={9} ry={3} fill="#b5b8c0" /><circle cx={26} cy={9} r={5} fill="url(#bl)" /><circle cx={21} cy={14} r={6} fill="url(#bl)" /><circle cx={12} cy={22} r={8} fill="url(#bl)" /></svg>
              <svg viewBox="0 0 35 35" className="h-[35px] w-[35px]"><rect x={3} y={4} width={28} height={26} fill="#8cb9e8" stroke="#555" strokeWidth={2.500} /><rect x={7.500} y={9.500} width={19} height={15} fill="#fff" stroke="#e03545" strokeWidth={1.800} /></svg>
            </div>
            {sections.map(([title, rows], i) => (
              <div key={title} className={`mr-[8px] ml-[9px] ${i === 0 ? "pt-px" : ""}`}>
                <div className="flex h-8 items-center border-b border-[#dee0e6] pl-px text-[19px]">{title}</div>
                {rows.map(([l, v, k]) => <Row key={l} label={l} value={v} kind={k} />)}
              </div>
            ))}
          </div>
        </aside>
      </main>

      <section className="flex h-[38px] shrink-0 items-center pt-[4px] pl-[4px]">
        <div className="mr-[5px] h-[30px] w-[3px] border-x border-[#d3d6de]" />
        {snaps.map(([s, on, w, faint]) => (
          <div key={s} className={`flex items-center gap-1 ${w}`}><Check on={on} faint={faint} />{s}</div>
        ))}
      </section>

      <footer className="flex h-[22px] shrink-0 border-t border-[#b9c3dc]">
        {status.map(([s, w, k]) => (
          <div key={s} className={`flex items-center border-[#b9c3dc] ${w} ${k === 1 || k === 3 ? "bg-[#cfd8f0]" : ""} ${k === 3 ? "font-medium text-black" : ""}`}>
            {k === 2 && <span className="mr-[4px] h-[14px] w-[14px] bg-black" />}
            {s}
          </div>
        ))}
      </footer>
    </div>
  );
}
